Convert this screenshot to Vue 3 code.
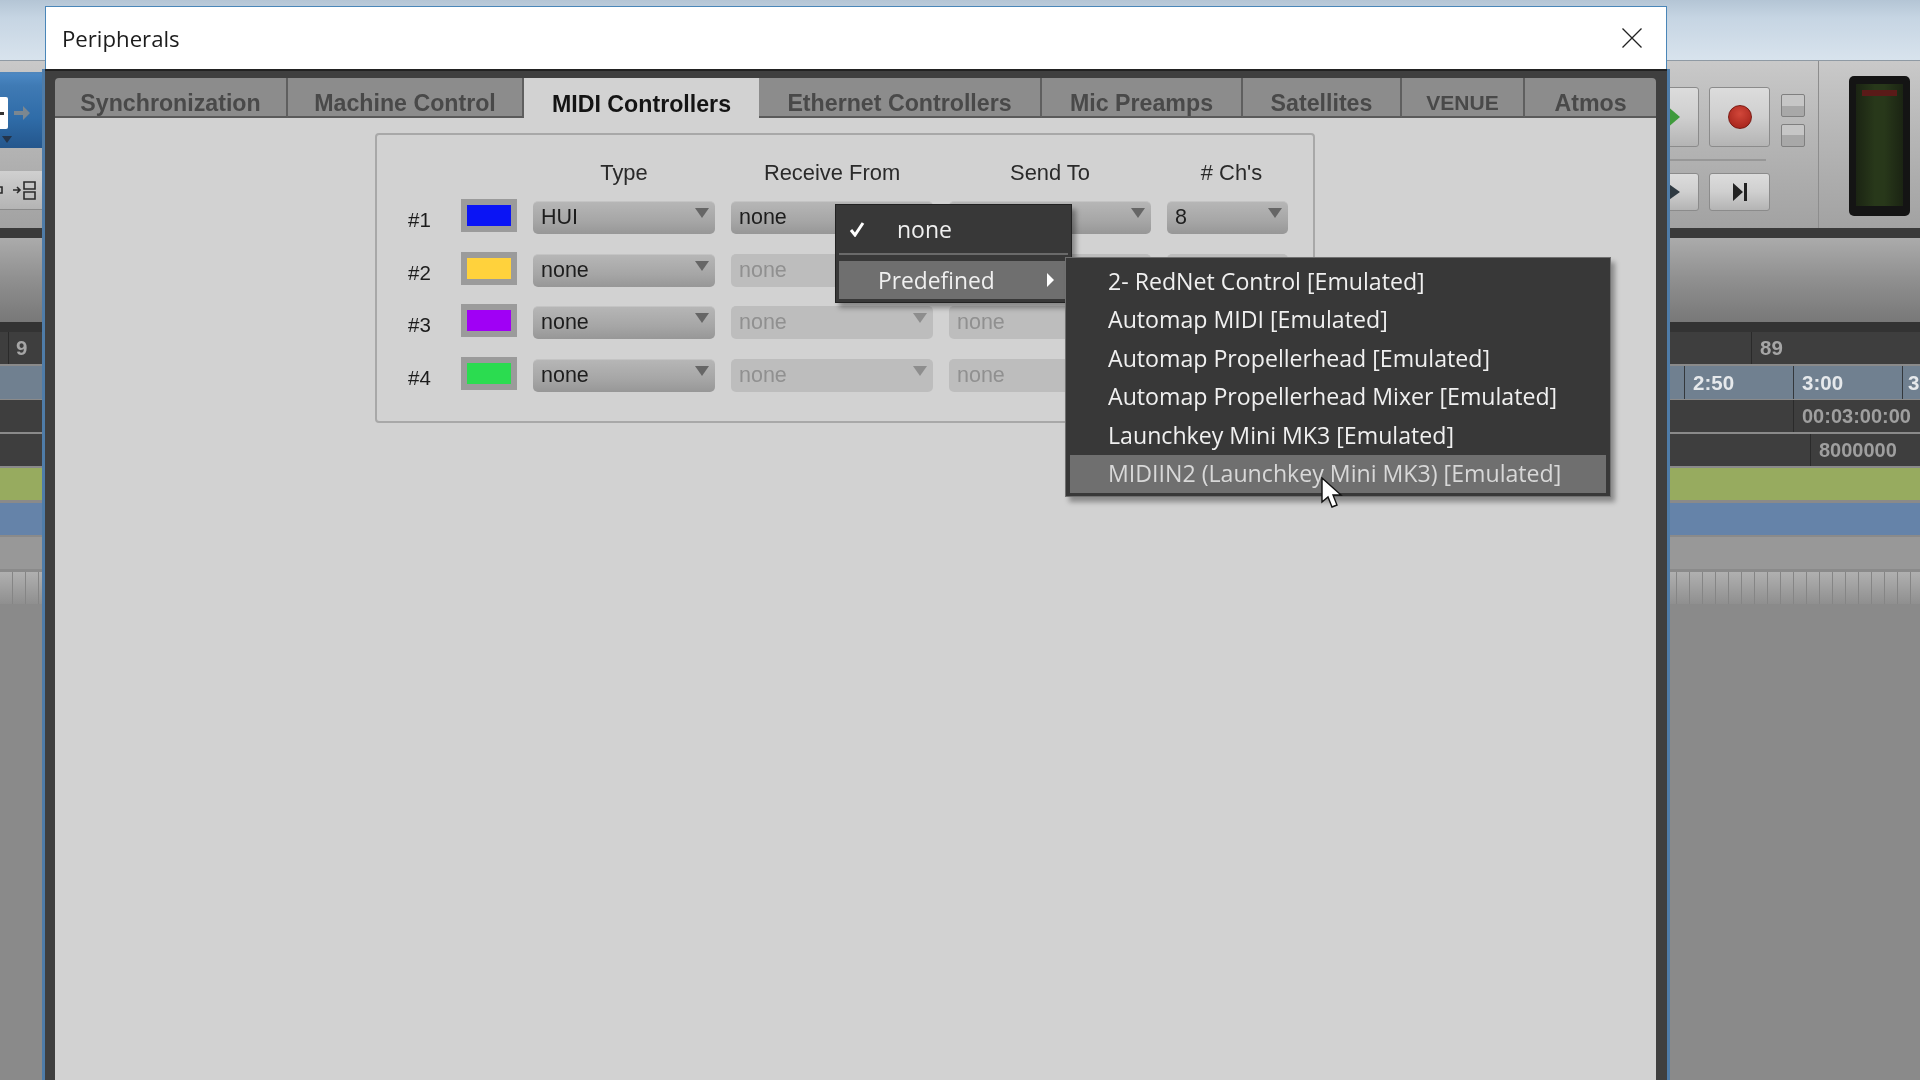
<template>
  <div class="app">
    <div class="sky"></div>

    <div class="toolbar">
      <div class="tool-left">
        <div class="blue-block">
          <div class="white-box"><span></span></div>
          <svg class="mini-arrow" width="18" height="16" viewBox="0 0 18 16"><path d="M1 6h9V1l7 7-7 7v-5H1z" fill="#7b8790" /></svg>
          <span class="mini-tri"></span>
        </div>
        <div class="tool-btn">
          <svg width="45" height="24" viewBox="0 0 45 24"><path d="M0 9h2v6H0M13 12h7M17 9l3 3-3 3M24 4h11v7H24zM24 14h11v7H24z" fill="none" stroke="#2b2b2b" stroke-width="1.6" /></svg>
        </div>
      </div>

      <div class="tool-right">
        <div class="transport">
          <div class="transport-row">
            <div class="t-btn wide tall">
              <svg class="play" width="14" height="24" viewBox="0 0 14 24"><path d="M0 0l14 12L0 24z" fill="#3f9a3c" /></svg>
            </div>
            <div class="t-btn rec tall"><span class="rec-dot"></span></div>
            <div class="small-col">
              <div class="t-small"></div>
              <div class="t-small"></div>
            </div>
          </div>
          <div class="t-sep"></div>
          <div class="transport-row">
            <div class="t-btn wide">
              <svg class="play" width="14" height="20" viewBox="0 0 14 20"><path d="M0 0l14 10L0 20z" fill="#2f3a42" /></svg>
            </div>
            <div class="t-btn rec">
              <svg width="16" height="18" viewBox="0 0 16 18"><path d="M1 0l10 9-10 9zM12 0h3v18h-3z" fill="#222" /></svg>
            </div>
          </div>
        </div>
        <div class="meter"><div class="meter-in"><span class="meter-peak"></span></div></div>
      </div>
    </div>

    <div class="dark-band"></div>
    <div class="grey-band"></div>

    <div class="tracks">
      <div class="ruler-row">
        <div class="cell" style="width: 6px"></div>
        <div class="cell first-bar" style="width: 1743px"><span class="num">9</span></div>
        <div class="cell grow"><span class="num">89</span></div>
      </div>
      <div class="ruler-row time">
        <div class="cell" style="width: 1685px"></div>
        <div class="cell" style="width: 109px"><span class="num">2:50</span></div>
        <div class="cell" style="width: 109px"><span class="num">3:00</span></div>
        <div class="cell grow last-mark"><span class="num">3</span></div>
      </div>
      <div class="ruler-row">
        <div class="cell" style="width: 1794px"></div>
        <div class="cell grow"><span class="num small">00:03:00:00</span></div>
      </div>
      <div class="ruler-row">
        <div class="cell" style="width: 1811px"></div>
        <div class="cell grow"><span class="num small">8000000</span></div>
      </div>
      <div class="lane green"></div>
      <div class="lane blue"></div>
      <div class="lane grey"></div>
      <div class="lane ribs"></div>
    </div>

    <div class="window">
      <div class="titlebar">
        <span class="title">Peripherals</span>
        <svg class="close" width="22" height="22" viewBox="0 0 22 22"><path d="M1.5 1.5l19 19M20.5 1.5l-19 19" stroke="#222" stroke-width="1.3" fill="none" /></svg>
      </div>

      <div class="frame">
        <div class="panel">
          <div class="tabs">
            <div
              v-for="tab in tabs"
              :key="tab.name"
              class="tab"
              :class="{ active: tab.active, tight: tab.tight }"
              :style="{ width: tab.width + 'px' }"
            >{{ tab.name }}</div>
          </div>

          <div class="group">
            <div class="grid">
              <div></div>
              <div></div>
              <div class="head">Type</div>
              <div class="head">Receive From</div>
              <div class="head">Send To</div>
              <div class="head chs"># Ch's</div>

              <template v-for="row in rows" :key="row.id">
                <div class="row-id">{{ row.id }}</div>
                <div class="swatch"><span :style="{ background: row.color }"></span></div>
                <div class="select">{{ row.type }}<i></i></div>
                <div class="select" :class="{ off: !row.on }">none<i></i></div>
                <div class="select" :class="{ off: !row.on }">{{ row.send }}<i></i></div>
                <div class="select" :class="{ off: !row.on }">{{ row.chs }}<i></i></div>
              </template>
            </div>
          </div>

          <div class="menu first-menu">
            <div class="menu-none">
              <svg width="16" height="16" viewBox="0 0 16 16"><path d="M2 9l4 5 8-12" fill="none" stroke="#fff" stroke-width="3" /></svg>
              <span>none</span>
            </div>
            <div class="menu-sep"></div>
            <div class="menu-pre">
              <span>Predefined</span>
              <i class="sub-arrow"></i>
            </div>
          </div>

          <div class="menu sub-menu">
            <div
              v-for="(item, i) in devices"
              :key="item"
              class="sub-item"
              :class="{ hover: i === devices.length - 1 }"
            >{{ item }}</div>
          </div>

          <svg class="cursor" width="22" height="32" viewBox="0 0 22 32">
            <path d="M1 1v24l6-5 4 10 5-2-4-10h8z" fill="#fff" stroke="#111" stroke-width="1.4" />
          </svg>
        </div>
      </div>
    </div>
  </div>
</template>

<script setup>
const tabs = [
  { name: 'Synchronization', width: 233 },
  { name: 'Machine Control', width: 236 },
  { name: 'MIDI Controllers', width: 235, active: true },
  { name: 'Ethernet Controllers', width: 283 },
  { name: 'Mic Preamps', width: 201 },
  { name: 'Satellites', width: 159 },
  { name: 'VENUE', width: 123, tight: true },
  { name: 'Atmos', width: 131 }
]

// send / # ch's stay empty where the open menus cover them
const rows = [
  { id: '#1', color: '#0a14f5', type: 'HUI', on: true, send: '', chs: '8' },
  { id: '#2', color: '#ffd23c', type: 'none', on: false, send: '', chs: '' },
  { id: '#3', color: '#a000f5', type: 'none', on: false, send: 'none', chs: '' },
  { id: '#4', color: '#2bdc50', type: 'none', on: false, send: 'none', chs: '' }
]

const devices = [
  '2- RedNet Control [Emulated]',
  'Automap MIDI [Emulated]',
  'Automap Propellerhead [Emulated]',
  'Automap Propellerhead Mixer [Emulated]',
  'Launchkey Mini MK3 [Emulated]',
  'MIDIIN2 (Launchkey Mini MK3) [Emulated]'
]
</script>

<style>
html, body { margin: 0; background: #8a8a8a; overflow: hidden; }
</style>

<style scoped>
.app {
  position: relative;
  width: 1920px;
  height: 1080px;
  overflow: hidden;
  background: #8a8a8a;
  font-family: "Liberation Sans", Arial, sans-serif;
  filter: blur(0.45px);
}
.sky {
  height: 60px;
  background: linear-gradient(180deg, #b4c5d5 0%, #c6d5e3 30%, #d8e3ed 100%);
}

.toolbar {
  height: 168px;
  display: flex;
  justify-content: space-between;
  background: linear-gradient(180deg, #c9c9c9 0%, #b6b6b6 45%, #a2a2a2 100%);
  border-top: 1px solid #8f9aa4;
  box-sizing: border-box;
}
.tool-left { width: 45px; padding-top: 11px; }
.blue-block {
  position: relative;
  height: 76px;
  box-sizing: border-box;
  border-top: 2px solid #4e86bd;
  background: linear-gradient(180deg, #4b88c4 0%, #3f7ab4 16%, #2f6ca8 60%, #24568c 100%);
}
.white-box {
  position: absolute;
  left: 0;
  top: 23px;
  width: 8px;
  height: 32px;
  background: #fff;
  border-radius: 0 2px 2px 0;
  display: flex;
  align-items: center;
}
.white-box span {
  display: block;
  width: 4px;
  height: 3px;
  background: #333;
}
.mini-arrow { position: absolute; left: 13px; top: 31px; }
.mini-tri {
  position: absolute;
  left: 2px;
  top: 62px;
  border: 5px solid transparent;
  border-top: 7px solid #24344a;
}
.tool-btn {
  margin-top: 23px;
  height: 38px;
  background: linear-gradient(180deg, #d0d0d0, #b4b4b4);
  border-bottom: 1px solid #8a8a8a;
  display: flex;
  align-items: center;
}

.tool-right { display: flex; width: 270px; }
.transport {
  width: 169px;
  box-sizing: border-box;
  padding-top: 26px;
  border-right: 1px solid #8d8d8d;
}
.transport-row { display: flex; gap: 10px; }
.t-btn {
  height: 38px;
  box-sizing: border-box;
  border: 1px solid #8b8b8b;
  border-radius: 3px;
  background: linear-gradient(180deg, #dcdcdc 0%, #cfcfcf 50%, #b4b4b4 100%);
  display: flex;
  align-items: center;
  justify-content: center;
}
.t-btn.tall { height: 60px; }
.t-btn.wide { width: 49px; position: relative; }
.t-btn.rec { width: 61px; }
.play { position: absolute; left: 15px; top: 50%; transform: translateY(-50%); }
.rec-dot {
  width: 24px;
  height: 24px;
  border-radius: 50%;
  background: radial-gradient(circle at 50% 35%, #d2473a, #9e1e16);
  border: 1px solid #7a1b14;
  box-sizing: border-box;
}
.small-col { display: flex; flex-direction: column; gap: 7px; margin: 7px 0 0 1px; }
.t-small {
  width: 24px;
  height: 23px;
  box-sizing: border-box;
  border: 1px solid #7f7f7f;
  border-radius: 2px;
  background: linear-gradient(180deg, #c6c6c6 0 50%, #a8a8a8 50%);
}
.t-sep { height: 2px; margin: 12px 4px 12px 0; background: #979797; width: 116px; }
.meter {
  margin: 15px 0 0 30px;
  width: 61px;
  height: 140px;
  box-sizing: border-box;
  padding: 8px 7px 10px;
  background: #141414;
  border-radius: 5px;
}
.meter-in {
  position: relative;
  height: 100%;
  background: linear-gradient(90deg, #1b2413, #28381a 40%, #28381a 60%, #1b2413);
}
.meter-peak {
  position: absolute;
  left: 6px;
  right: 6px;
  top: 6px;
  height: 6px;
  background: #5a1a18;
}

.dark-band { height: 10px; background: #3a3a3a; }
.grey-band {
  height: 84px;
  background: linear-gradient(180deg, #ababab 0%, #8f8f8f 50%, #787878 100%);
}

.tracks { border-top: 10px solid #333; }
.ruler-row {
  display: flex;
  height: 32px;
  margin-bottom: 2px;
  background: #3e3e3e;
}
.ruler-row.time { height: 33px; margin-bottom: 1px; }
.ruler-row .cell {
  flex: none;
  box-sizing: border-box;
  border-right: 1px solid #2a2a2a;
  display: flex;
  align-items: center;
  padding-left: 8px;
}
.ruler-row .grow { flex: 1; border-right: 0; }
.ruler-row .first-bar { padding-left: 7px; }
.ruler-row .last-mark { padding-left: 5px; }
.ruler-row.time .cell { background: #708090; border-right-color: #34383c; }
.num {
  font-size: 20.5px;
  font-weight: 700;
  color: #a6a6a6;
  white-space: nowrap;
}
.num.small { color: #9f9f9f; font-size: 20px; }
.ruler-row.time .num { color: #e6e9ec; }
.lane { height: 32px; margin-bottom: 3px; }
.lane.green { background: #97ab5f; margin-top: 2px; }
.lane.blue { background: #6583a9; margin-bottom: 2px; }
.lane.grey { background: #989898; }
.lane.ribs {
  background:
    repeating-linear-gradient(90deg, transparent 0 12px, #858585 12px 13px),
    linear-gradient(180deg, #b0b0b0, #8f8f8f);
}

.window {
  position: absolute;
  left: 45px;
  top: 6px;
  width: 1622px;
  height: 1080px;
  display: flex;
  flex-direction: column;
}
.titlebar {
  height: 63px;
  flex: none;
  box-sizing: border-box;
  border: 1px solid #4a86b8;
  border-bottom: 0;
  background: #fff;
  display: flex;
  align-items: center;
  justify-content: space-between;
  padding: 0 23px 0 16px;
}
.title {
  font-family: "Open Sans", sans-serif;
  font-size: 22.2px;
  color: #1c1c1c;
}
.frame {
  flex: 1;
  background: #3f3f3f;
  border-top: 2px solid #222;
  box-shadow: -3px 0 0 #4f7ca8, 3px 0 0 #4f7ca8;
  padding: 7px 11px 0 10px;
}
.panel {
  position: relative;
  height: 100%;
  background: #d2d2d2;
}
.tabs { display: flex; height: 40px; background: #3f3f3f; }
.tab {
  box-sizing: border-box;
  height: 40px;
  padding-top: 12px;
  display: flex;
  align-items: center;
  justify-content: center;
  background: #8c8c8c;
  border-right: 2px solid #5f5f5f;
  border-bottom: 2px solid #5a5a5a;
  font-size: 23.2px;
  font-weight: 700;
  color: #494949;
}
.tab.tight { font-size: 21px; }
.tab:first-child { border-top-left-radius: 4px; }
.tab:last-child { border-top-right-radius: 4px; border-right: 0; }
.tab.active {
  background: #d2d2d2;
  color: #141414;
  border-right: 0;
  border-bottom: 0;
}

.group {
  margin: 15px 0 0 320px;
  width: 940px;
  height: 290px;
  box-sizing: border-box;
  border: 2px solid #a8a8a8;
  border-radius: 4px;
}
.grid {
  display: grid;
  grid-template-columns: 68px 56px 182px 202px 202px 121px;
  grid-template-rows: 22.5px;
  column-gap: 16px;
  row-gap: 19.5px;
  grid-auto-rows: 33px;
  padding-top: 22px;
  align-items: start;
}
.head {
  text-align: center;
  font-size: 21.9px;
  color: #2a2a2a;
  line-height: 30px;
  margin-top: 1px;
}
.head.chs { padding-left: 8px; }
.row-id {
  padding: 8px 0 0 31px;
  font-size: 20.5px;
  line-height: 26px;
  color: #1c1c1c;
}
.swatch {
  box-sizing: border-box;
  height: 33px;
  padding: 6px;
  background: #9b9b9b;
}
.swatch span { display: block; height: 21px; }
.select {
  position: relative;
  box-sizing: border-box;
  height: 33px;
  margin-top: 2px;
  padding-left: 8px;
  line-height: 31px;
  font-size: 21.5px;
  color: #1d1d1d;
  border-radius: 5px;
  border-top: 1px solid #c4c4c4;
  background: linear-gradient(180deg, #b6b6b6 0%, #a6a6a6 60%, #979797 100%);
}
.select i {
  position: absolute;
  right: 6px;
  top: 6px;
  border-left: 7px solid transparent;
  border-right: 7px solid transparent;
  border-top: 10px solid #666;
}
.select.off {
  background: #bdbdbd;
  border-top-color: #bdbdbd;
  color: #909090;
}
.select.off i { border-top-color: #8e8e8e; }

.menu {
  position: absolute;
  box-sizing: border-box;
  background: #383838;
  color: #f0f0f0;
  font-family: "Open Sans", sans-serif;
  box-shadow: 4px 5px 5px rgba(0, 0, 0, 0.35);
}
.first-menu {
  left: 780px;
  top: 126px;
  width: 237px;
  height: 99px;
  border: 1px solid #222;
  padding: 0 3px;
}
.menu-none {
  height: 47px;
  display: flex;
  align-items: center;
  font-size: 23px;
}
.menu-none svg { margin: 0 0 0 10px; }
.menu-none span { margin-left: 32px; }
.menu-sep { height: 2px; background: #6a6a6a; margin: 1px 0 6px; }
.menu-pre {
  height: 38px;
  display: flex;
  align-items: center;
  justify-content: space-between;
  padding: 0 36px 0 39px;
  background: #6f6f6f;
  font-size: 22.8px;
}
.sub-arrow {
  border-top: 7px solid transparent;
  border-bottom: 7px solid transparent;
  border-left: 7px solid #fff;
  margin-right: -22px;
}
.sub-menu {
  left: 1010px;
  top: 179px;
  width: 546px;
  height: 240px;
  border: 1px solid #707070;
  padding: 5px 4px;
}
.sub-item {
  height: 38.4px;
  line-height: 36px;
  padding-left: 38px;
  font-size: 23.15px;
  white-space: nowrap;
}
.sub-item.hover { background: #6f6f6f; color: #d8d8d8; }
.cursor { position: absolute; left: 1266px; top: 399px; }
.close { display: block; }
</style>
